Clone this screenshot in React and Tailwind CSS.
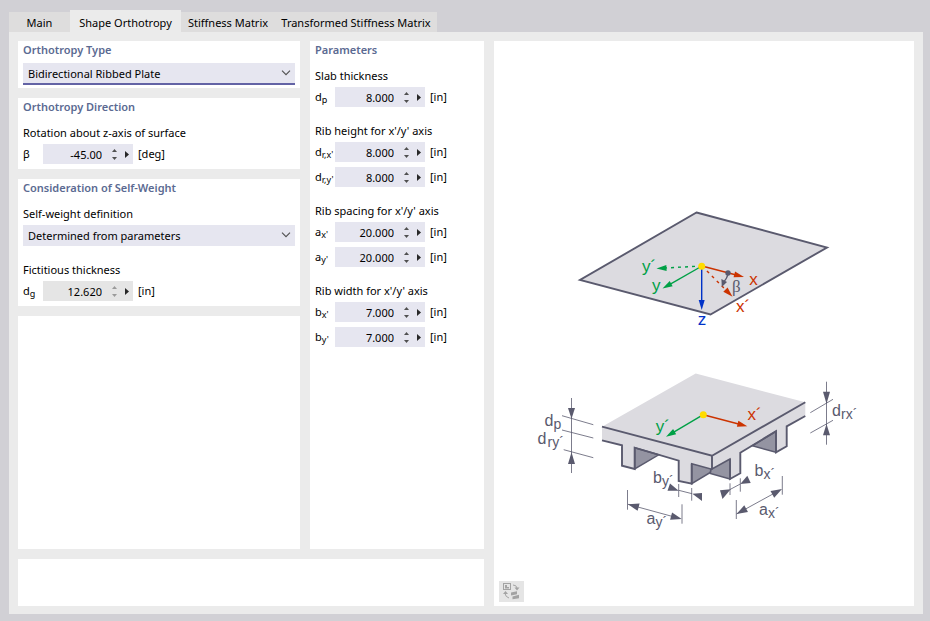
import React, { useId } from "react";

const INK = "#5a5a6e";
const RED = "#cc3300";
const GREEN = "#00a046";
const BLUE = "#0032c8";

function Card({ title, className = "", children }) {
  return (
    <section className={`bg-white px-[5px] ${className}`}>
      {title && <h2 className="h-[18px] text-[11px] leading-[18px] font-semibold text-[#5b6a92]">{title}</h2>}
      {children}
    </section>
  );
}

function Combo({ label, value, active }) {
  return (
    <div className="relative">
      <select
        aria-label={label}
        className={`block w-full appearance-none rounded-none bg-[#e6e6f0] pt-[2px] pr-6 pl-[5px] text-[11px] outline-none ${
          active ? "h-[22px] border-b-2 border-[#6363a5]" : "h-[21px]"
        }`}
      >
        <option>{value}</option>
      </select>
      <svg className="pointer-events-none absolute top-[7px] right-1 h-[6px] w-[10px]" viewBox="0 0 10 6">
        <path d="M1 .7L5 4.7L9 .7" fill="none" stroke="#505050" strokeWidth="1.1" />
      </svg>
    </div>
  );
}

function Field({ symbol, sub, value, unit, disabled }) {
  const id = useId();
  const tone = disabled ? "fill-[#9a9a9a]" : "fill-[#505050]";
  return (
    <div className="flex h-5 items-center">
      <label htmlFor={id} className="w-5 shrink-0 whitespace-nowrap">
        {symbol}
        {sub && <sub className="bottom-[-2px] text-[9px]">{sub}</sub>}
      </label>
      <div className={`flex h-5 w-[90px] shrink-0 ${disabled ? "bg-[#e5e5e5]" : "bg-[#e6e6f0]"}`}>
        <input
          id={id}
          defaultValue={value}
          readOnly={disabled}
          className="h-full w-[60px] bg-transparent pt-px pr-px text-right outline-none"
        />
        <div className="flex w-[22px] flex-col">
          <button aria-label="Increase" className="flex h-[10px] items-end justify-center pb-[2px]">
            <svg className={`h-[3px] w-[5px] ${tone}`} viewBox="0 0 5 3">
              <path d="M0 3L2.5 0L5 3Z" />
            </svg>
          </button>
          <button aria-label="Decrease" className="flex h-[10px] items-start justify-center pt-[3px]">
            <svg className={`h-[3px] w-[5px] ${tone}`} viewBox="0 0 5 3">
              <path d="M0 0L2.5 3L5 0Z" />
            </svg>
          </button>
        </div>
        <button aria-label="More options" className="flex w-2 items-center">
          <svg className="h-[7px] w-[4px] fill-[#282828]" viewBox="0 0 4 7">
            <path d="M0 0L4 3.5L0 7Z" />
          </svg>
        </button>
      </div>
      <span className="ml-[5px]">{unit}</span>
    </div>
  );
}

function Group({ label, children }) {
  return (
    <div>
      <p className="mb-[3px] leading-4">{label}</p>
      <div className="flex flex-col gap-[5px]">{children}</div>
    </div>
  );
}

function Arrow({ from, to, color, width = 1.4, dash, both, head = 10, half = 3 }) {
  const dx = to[0] - from[0];
  const dy = to[1] - from[1];
  const len = Math.hypot(dx, dy);
  const u = [dx / len, dy / len];
  const tip = (p, s) => {
    const b = [p[0] - u[0] * head * s, p[1] - u[1] * head * s];
    return `${p[0]},${p[1]} ${b[0] - u[1] * half},${b[1] + u[0] * half} ${b[0] + u[1] * half},${b[1] - u[0] * half}`;
  };
  return (
    <g>
      <line
        x1={from[0]}
        y1={from[1]}
        x2={to[0] - u[0] * (head - 2)}
        y2={to[1] - u[1] * (head - 2)}
        stroke={color}
        strokeWidth={width}
        strokeDasharray={dash}
      />
      <polygon points={tip(to, 1)} fill={color} />
      {both && <polygon points={tip(from, -1)} fill={color} />}
    </g>
  );
}

function Dim({ x, y, base, sub, dx = 9 }) {
  return (
    <g fill={INK}>
      <text x={x} y={y} fontSize="16">{base}</text>
      <text x={x + dx} y={y + 3} fontSize="14">{sub}</text>
    </g>
  );
}

function Diagram() {
  return (
    <svg
      role="img"
      aria-label="Bidirectional ribbed plate"
      className="h-[442px] w-[340px]"
      fontFamily="'Liberation Sans', Arial, sans-serif"
      viewBox="534 90 340 442"
    >
      <polygon points="696.5,212.5 827,247.5 710.5,314.5 580,280" fill="#dcdbe0" stroke={INK} strokeWidth="1.9" />
      <Arrow from={[702, 266]} to={[656.5, 268.5]} color={GREEN} dash="3 4" />
      <Arrow from={[702, 266]} to={[662.5, 288.5]} color={GREEN} />
      <Arrow from={[702, 266]} to={[732.5, 296.7]} color={RED} dash="3 4" />
      <Arrow from={[702, 266]} to={[744, 277]} color={RED} />
      <Arrow from={[701.7, 266]} to={[701.7, 310]} color={BLUE} />
      <path d="M728 273Q727.5 278 723.5 282" fill="none" stroke={INK} strokeWidth="1.4" />
      <polygon points="721.8,287 721.4,279 727,282" fill={INK} />
      <circle cx="728" cy="273" r="2.7" fill={INK} />
      <circle cx="701.7" cy="266.2" r="3.5" fill="#ffdc00" />
      <g fontSize="17">
        <text x="642" y="271.5" fill={GREEN}>y´</text>
        <text x="652" y="291" fill={GREEN}>y</text>
        <text x="749.3" y="285" fill={RED}>x</text>
        <text x="736" y="312" fill={RED}>x´</text>
        <text x="697.7" y="325" fill={BLUE}>z</text>
        <text x="732" y="292" fill={INK} fontFamily="'Liberation Serif', serif">β</text>
      </g>

      <path
        d="M602 426.7L695.7 373.5L805.3 402.3V416L786.7 426.3V446.3L776 452.3V431.3L740.3 452.7V473.3L730 479V459L712 469.5L691.7 463.7V483.7L678.7 481V460.7L634.7 447.7V469L622 465.7V445.3L602 440.3Z"
        fill="#dcdbe0"
      />
      <g fill="#9494a2" stroke={INK} strokeWidth="1.5">
        <path d="M634.7 447.7L658.7 454.8L634.7 469Z" />
        <path d="M691.7 463.7L711 469L710.3 472.5L691.7 483.7Z" />
        <path d="M730 459L711 469.5L710.3 473.5L730 479Z" />
        <path d="M776 431.3L752.3 445.8L776 452.3Z" />
      </g>
      <g fill="none" stroke={INK} strokeWidth="1.9">
        <path d="M602 426.7L712 455.7L805.3 402.3M712 455.7V469.5" />
        <path d="M602 440.3L622 445.3V465.7L634.7 469V447.7L678.7 460.7V481L691.7 483.7V463.7" />
        <path d="M730 459V479L740.3 473.3V452.7L776 431.3V452.3L786.7 446.3V426.3L805.3 416" />
      </g>
      <Arrow from={[703.3, 414.7]} to={[666, 436.7]} color={GREEN} />
      <Arrow from={[703.3, 414.7]} to={[747.3, 426.3]} color={RED} />
      <circle cx="703.3" cy="414.7" r="3.5" fill="#ffdc00" />
      <g fontSize="17">
        <text x="655.7" y="431.7" fill={GREEN}>y´</text>
        <text x="747.5" y="420" fill={RED}>x´</text>
      </g>

      <g stroke={INK} strokeWidth="0.8">
        <path d="M562 415.7L593.3 424.7M562 430L593.3 438M563.7 449.7L593.3 457.7M571.5 398V473" />
        <path d="M678.7 484V497M691.7 488V500.7M678.7 490.3L692 493.7" />
        <path d="M627.5 490V509.7M682 504.3V523.7" />
        <path d="M730 483.3V495M740.3 478.3V491.7M730 489.5L740.3 484" />
        <path d="M736.3 500V519M782.3 476V494.7" />
        <path d="M810.3 412.7L833 399.3M810.3 433L833 420.3M826.5 381.7V444.7" />
      </g>
      <g fill={INK}>
        <polygon points="571.5,418.7 568,408 575,408" />
        <polygon points="571.5,452.3 568,464 575,464" />
        <polygon points="826.5,403.7 823,391.7 830,391.7" />
        <polygon points="826.5,424 823,435.3 830,435.3" />
        <polygon points="678.7,490.7 670,483.5 667.5,490.7" />
        <polygon points="692.3,493.7 702,493 702,501" />
        <polygon points="730.7,489.3 720,490.3 722.5,499" />
        <polygon points="740.3,484 747.3,475.7 750.7,483" />
      </g>
      <Arrow from={[628, 504.3]} to={[681.7, 519]} color={INK} width={0.8} both head={11} half={3.8} />
      <Arrow from={[736.5, 514]} to={[782, 489]} color={INK} width={0.8} both head={11} half={3.8} />
      <Dim x={544.5} y={425.7} base="d" sub="p" />
      <Dim x={537.5} y={443.7} base="d" sub="ry´" dx={10} />
      <Dim x={832} y={415.7} base="d" sub="rx´" />
      <Dim x={653} y={482.5} base="b" sub="y´" />
      <Dim x={646.5} y={524.3} base="a" sub="y´" />
      <Dim x={754.5} y={475.7} base="b" sub="x´" />
      <Dim x={759} y={515} base="a" sub="x´" />
    </svg>
  );
}

const tabs = [
  { name: "Main", width: "w-[61px]" },
  { name: "Shape Orthotropy", width: "w-[111px]", active: true },
  { name: "Stiffness Matrix", width: "w-[94px]" },
  { name: "Transformed Stiffness Matrix", width: "w-[162px]" },
];

export default function App() {
  return (
    <div className="flex min-h-screen flex-col bg-[#d1d0d5] pt-[10px] pr-[7px] pb-[7px] pl-[9px] font-['Noto_Sans','Open_Sans',sans-serif] text-[11px] text-black">
      <div role="tablist" className="flex h-[22px] items-end">
        {tabs.map((t) => (
          <button
            key={t.name}
            role="tab"
            aria-selected={!!t.active}
            className={`shrink-0 whitespace-nowrap ${t.width} ${
              t.active ? "h-[22px] bg-[#ebebeb] pt-1" : "h-5 bg-[#dedddd] pt-[2px]"
            }`}
          >
            {t.name}
          </button>
        ))}
      </div>
      <main className="flex flex-1 gap-[10px] bg-[#ebebeb] px-[9px] pt-[9px] pb-2">
        <div className="flex w-[466px] shrink-0 flex-col gap-[10px]">
          <div className="flex flex-1 gap-[10px]">
            <div className="flex flex-1 flex-col gap-[10px]">
              <Card title="Orthotropy Type" className="pb-[3px]">
                <div className="mt-1">
                  <Combo label="Orthotropy Type" value="Bidirectional Ribbed Plate" active />
                </div>
              </Card>
              <Card title="Orthotropy Direction" className="pb-[5px]">
                <div className="mt-[9px]">
                  <Group label="Rotation about z-axis of surface">
                    <Field symbol="β" value="-45.00" unit="[deg]" />
                  </Group>
                </div>
              </Card>
              <Card title="Consideration of Self-Weight" className="pb-[5px]">
                <div className="mt-[9px] flex flex-col gap-4">
                  <Group label="Self-weight definition">
                    <Combo label="Self-weight definition" value="Determined from parameters" />
                  </Group>
                  <Group label="Fictitious thickness">
                    <Field symbol="d" sub="g" value="12.620" unit="[in]" disabled />
                  </Group>
                </div>
              </Card>
              <Card className="flex-1" />
            </div>
            <Card title="Parameters" className="w-[174px]">
              <div className="mt-[9px] flex flex-col gap-4">
                <Group label="Slab thickness">
                  <Field symbol="d" sub="p" value="8.000" unit="[in]" />
                </Group>
                <Group label="Rib height for x'/y' axis">
                  <Field symbol="d" sub="r,x'" value="8.000" unit="[in]" />
                  <Field symbol="d" sub="r,y'" value="8.000" unit="[in]" />
                </Group>
                <Group label="Rib spacing for x'/y' axis">
                  <Field symbol="a" sub="x'" value="20.000" unit="[in]" />
                  <Field symbol="a" sub="y'" value="20.000" unit="[in]" />
                </Group>
                <Group label="Rib width for x'/y' axis">
                  <Field symbol="b" sub="x'" value="7.000" unit="[in]" />
                  <Field symbol="b" sub="y'" value="7.000" unit="[in]" />
                </Group>
              </div>
            </Card>
          </div>
          <Card className="h-[47px]" />
        </div>
        <section className="flex flex-1 flex-col bg-white px-[5px] pb-1">
          <div className="flex flex-1 items-center justify-center">
            <Diagram />
          </div>
          <button aria-label="Switch picture" className="flex h-[21px] w-[25px] items-center justify-center bg-[#e5e5e5]">
            <svg className="h-[17px] w-[17px]" viewBox="0 0 17 17" fill="none" stroke="#a3a3a3">
              <rect x="0.5" y="0.5" width="7" height="6" />
              <path d="M2 2h2v2h2v1.500H2z" fill="#a3a3a3" stroke="none" />
              <path d="M10 2q3.500 0 4 3M2 10.500q.5 3.500 4 4.500" />
              <path d="M11.500 4.500h5l-2.500 3zM0 11l2.500-3L5 11z" fill="#a3a3a3" stroke="none" />
              <path d="M8 9.500l6-1.200v3l-6 1.200zM9.500 13.500l6.500-1.800v3.500l-6.500 1z" fill="#a3a3a3" stroke="none" />
            </svg>
          </button>
        </section>
      </main>
    </div>
  );
}
